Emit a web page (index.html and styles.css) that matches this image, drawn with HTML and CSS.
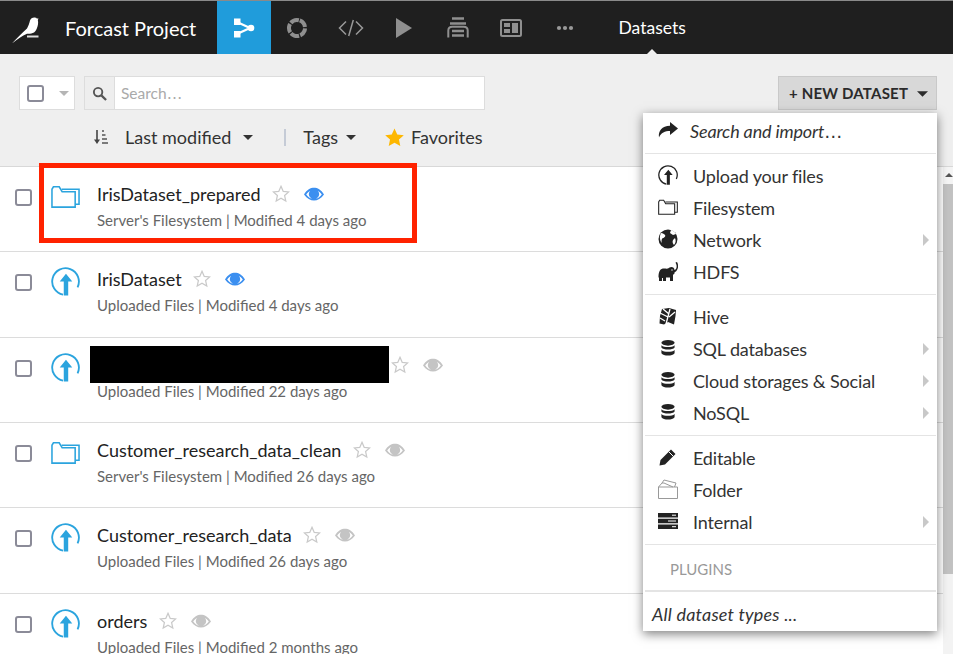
FILE: index.html
```html
<!DOCTYPE html>
<html lang="en">
<head>
  <meta charset="UTF-8" />
  <meta name="viewport" content="width=device-width, initial-scale=1.0"/>
  <title>Datasets - Forcast Project</title>
  <link rel="stylesheet" href="styles.css">
</head>
<body>
  <svg class="defs" width="0" height="0">
    <defs>
      <symbol id="ic-folder" viewBox="0 0 30 24">
        <path d="M1 23h24V7H11.500L8.500 2H2.500L1 4.500z" fill="none" stroke="currentColor" stroke-width="1.600"/>
        <path d="M11 4.500h18V20h-4" fill="none" stroke="currentColor" stroke-width="1.600"/>
      </symbol>
      <symbol id="ic-upload" viewBox="0 0 30 30">
        <path d="M12.500 28.600A13.800 13.800 0 1 1 27.500 21" fill="none" stroke="currentColor" stroke-width="1.900"/>
        <path d="M15.500 7l6.500 8h-4.200v14.500h-4.600V15H9z" fill="currentColor"/>
      </symbol>
      <symbol id="ic-star" viewBox="0 0 20 20">
        <path d="M10 1.500l2.500 5.600 6 .6-4.500 4 1.300 6L10 14.600 4.700 17.700l1.300-6-4.500-4 6-.6z" fill="none" stroke="currentColor" stroke-width="1.400"/>
      </symbol>
      <symbol id="ic-eye" viewBox="0 0 20 14">
        <path d="M0 7.500C3 2.500 6.500 .8 10 .8s7 1.700 10 6.700c-3 4.200-6.500 6-10 6s-7-1.800-10-6zM2.200 7.500c2.300 3 5 4.500 7.800 4.500s5.500-1.500 7.800-4.500C16.500 5.700 15 4.500 14 4a5 5 0 1 1-8 0c-1 .5-2.500 1.700-3.800 3.500z" fill="currentColor"/>
      </symbol>
      <symbol id="ic-db" viewBox="0 0 16 17">
        <ellipse cx="8" cy="3" rx="7" ry="3" fill="currentColor"/>
        <path d="M1 5.500C2.500 7 5 7.500 8 7.500s5.500-.5 7-2V8c-1 1.500-4 2.200-7 2.200S2 9.500 1 8zM1 10.500c1.500 1.500 4 2 7 2s5.500-.5 7-2V14c-1 1.700-4 2.500-7 2.500S2 15.700 1 14z" fill="currentColor"/>
      </symbol>
      <symbol id="ic-caret" viewBox="0 0 10 5">
        <path d="M0 0h10L5 5z" fill="currentColor"/>
      </symbol>
    </defs>
  </svg>

  <header class="topbar">
    <a class="brand">
      <svg class="bird" viewBox="0 0 30 30" width="30" height="30">
        <path d="M1 30.500C5 26 11 20 16 15.500c1.500-2.500 2.200-5 3-8 .8-2 2.500-3.300 5-3 1 .1 1.500.5 1.800 1H27.500L26.800 7c.5 2 .4 4-.3 6.500-.8 3-2 5-3.500 6-2 1.200-4.500 1.300-7 1.200C11 23 6 26.500 1 30.500z" fill="#fff"/>
        <path d="M16 22.500h11.500v2H16z" fill="#ddd"/>
      </svg>
      <span>Forcast Project</span>
    </a>
    <a class="nav-item active">
      <svg viewBox="0 0 22 22" width="22" height="22">
        <path d="M4 5l13 6L4 17" fill="none" stroke="#fff" stroke-width="2.200"/>
        <rect x="1" y="1.500" width="6.500" height="6.500" fill="#fff"/>
        <rect x="1" y="14" width="6.500" height="6.500" fill="#fff"/>
        <circle cx="18" cy="11" r="3.300" fill="#fff"/>
      </svg>
    </a>
    <a class="nav-item">
      <svg viewBox="0 0 22 22" width="22" height="22">
        <circle cx="11" cy="11" r="8" fill="none" stroke="#8f8f8f" stroke-width="4" stroke-dasharray="8.800 1.250" transform="rotate(-70 11 11)"/>
      </svg>
    </a>
    <a class="nav-item">
      <svg viewBox="0 0 26 18" width="26" height="18">
        <path d="M8 2.500L1.500 9 8 15.500M18 2.500L24.500 9 18 15.500M15.300 1l-4.600 16" fill="none" stroke="#999" stroke-width="1.500"/>
      </svg>
    </a>
    <a class="nav-item">
      <svg viewBox="0 0 16 20" width="16" height="20"><path d="M0 0l16 10L0 20z" fill="#8f8f8f"/></svg>
    </a>
    <a class="nav-item">
      <svg viewBox="0 0 22 21" width="22" height="21">
        <path d="M5 1.500h12M3 6.500h16" stroke="#8f8f8f" stroke-width="2.600" fill="none"/>
        <path d="M1.300 20.500v-7c0-3 2-3.700 4-3.700h11.400c2 0 4 .7 4 3.700v7" stroke="#8f8f8f" stroke-width="2" fill="none"/>
        <path d="M5 14h12M5 18.500h12" stroke="#8f8f8f" stroke-width="2.400" fill="none"/>
      </svg>
    </a>
    <a class="nav-item">
      <svg viewBox="0 0 22 18" width="22" height="18">
        <rect x="1" y="1" width="20" height="16" rx="1.500" fill="none" stroke="#8f8f8f" stroke-width="2"/>
        <path d="M4 4h6v4H4zM4 10h6v4H4zM12 4h6v10h-6z" fill="#8f8f8f"/>
      </svg>
    </a>
    <a class="nav-item">
      <svg viewBox="0 0 18 6" width="18" height="6">
        <circle cx="3" cy="3" r="2.100" fill="#999"/><circle cx="9" cy="3" r="2.100" fill="#999"/><circle cx="15" cy="3" r="2.100" fill="#999"/>
      </svg>
    </a>
    <a class="nav-title">Datasets</a>
  </header>

  <section class="toolbar">
    <div class="toolbar-main">
      <div class="select-all">
        <span class="check"></span>
        <svg class="caret-muted" width="10" height="5"><use href="#ic-caret"/></svg>
      </div>
      <div class="search">
        <span class="search-icon">
          <svg viewBox="0 0 16 16" width="15" height="15"><circle cx="6.500" cy="6.500" r="4.500" fill="none" stroke="#555" stroke-width="2"/><path d="M10 10l5 5" stroke="#555" stroke-width="2.400"/></svg>
        </span>
        <span class="search-input">Search<span class="ell">…</span></span>
      </div>
      <button class="new-btn">+ NEW DATASET <svg width="11" height="6"><use href="#ic-caret"/></svg></button>
    </div>
    <div class="toolbar-filters">
      <svg viewBox="0 0 14 16" width="14" height="16">
        <path d="M3 1v12" stroke="#444" stroke-width="1.600"/><path d="M0 10.500h6L3 15z" fill="#444"/>
        <path d="M8 2h2M8 6h3.500M8 10h5M8 14h6" stroke="#555" stroke-width="1.500"/>
      </svg>
      <span class="sort">Last modified</span>
      <svg width="10" height="5"><use href="#ic-caret"/></svg>
      <i class="sep"></i>
      <span>Tags</span>
      <svg width="10" height="5"><use href="#ic-caret"/></svg>
      <svg class="fav-star" viewBox="0 0 20 20" width="19" height="19"><path d="M10 .5l2.900 6.300 6.900.8-5.100 4.600 1.400 6.800-6.100-3.400-6.100 3.400 1.400-6.800L.2 7.600l6.900-.8z" fill="#fdb700"/></svg>
      <span>Favorites</span>
    </div>
  </section>

  <main class="list-wrap">
    <ul class="list">
      <li class="row">
        <span class="check"></span>
        <svg class="type-icon" width="29" height="29"><use href="#ic-folder"/></svg>
        <div class="info">
          <div class="name">IrisDataset_prepared <svg class="star" width="18" height="18"><use href="#ic-star"/></svg> <svg class="eye on" width="20" height="14"><use href="#ic-eye"/></svg></div>
          <div class="meta">Server's Filesystem | Modified 4 days ago</div>
        </div>
      </li>
      <li class="row">
        <span class="check"></span>
        <svg class="type-icon" width="29" height="29"><use href="#ic-upload"/></svg>
        <div class="info">
          <div class="name">IrisDataset <svg class="star" width="18" height="18"><use href="#ic-star"/></svg> <svg class="eye on" width="20" height="14"><use href="#ic-eye"/></svg></div>
          <div class="meta">Uploaded Files | Modified 4 days ago</div>
        </div>
      </li>
      <li class="row">
        <span class="check"></span>
        <svg class="type-icon" width="29" height="29"><use href="#ic-upload"/></svg>
        <div class="info">
          <div class="name"><span class="redacted"></span> <svg class="star" width="18" height="18"><use href="#ic-star"/></svg> <svg class="eye" width="20" height="14"><use href="#ic-eye"/></svg></div>
          <div class="meta">Uploaded Files | Modified 22 days ago</div>
        </div>
      </li>
      <li class="row">
        <span class="check"></span>
        <svg class="type-icon" width="29" height="29"><use href="#ic-folder"/></svg>
        <div class="info">
          <div class="name">Customer_research_data_clean <svg class="star" width="18" height="18"><use href="#ic-star"/></svg> <svg class="eye" width="20" height="14"><use href="#ic-eye"/></svg></div>
          <div class="meta">Server's Filesystem | Modified 26 days ago</div>
        </div>
      </li>
      <li class="row">
        <span class="check"></span>
        <svg class="type-icon" width="29" height="29"><use href="#ic-upload"/></svg>
        <div class="info">
          <div class="name">Customer_research_data <svg class="star" width="18" height="18"><use href="#ic-star"/></svg> <svg class="eye" width="20" height="14"><use href="#ic-eye"/></svg></div>
          <div class="meta">Uploaded Files | Modified 26 days ago</div>
        </div>
      </li>
      <li class="row">
        <span class="check"></span>
        <svg class="type-icon" width="29" height="29"><use href="#ic-upload"/></svg>
        <div class="info">
          <div class="name">orders <svg class="star" width="18" height="18"><use href="#ic-star"/></svg> <svg class="eye" width="20" height="14"><use href="#ic-eye"/></svg></div>
          <div class="meta">Uploaded Files | Modified 2 months ago</div>
        </div>
      </li>
    </ul>
    <div class="scrollbar">
      <span class="scroll-up"></span>
      <span class="scroll-thumb"></span>
    </div>
  </main>

  <div class="highlight"></div>

  <nav class="menu">
    <a class="menu-item em">
      <svg class="mi" viewBox="0 0 20 16" width="20" height="16"><path d="M12 0l8 6.500L12 13V9C7 9 3 10.500 1 15.500 0 9 4 3.800 12 3.800z" fill="#222"/></svg>
      <span>Search and import<span class="ell">…</span></span>
    </a>
    <hr>
    <a class="menu-item">
      <svg class="mi" width="20" height="20"><use href="#ic-upload"/></svg>
      <span>Upload your files</span>
    </a>
    <a class="menu-item">
      <svg class="mi" width="20" height="16"><use href="#ic-folder"/></svg>
      <span>Filesystem</span>
    </a>
    <a class="menu-item sub">
      <svg class="mi" viewBox="0 0 20 20" width="20" height="20"><circle cx="10" cy="10" r="9.500" fill="#222"/><path d="M3 4c2 0 3 1 4 2s-1 3-2 3-2 3-1 5c-2-2-3-6-1-10zM13 1c2 .5 4 2 5 4l-3 1-3-2zM17 9c1 2 1 5-1 7-1-1-2-3-1-5z" fill="#fff"/></svg>
      <span>Network</span>
    </a>
    <a class="menu-item">
      <svg class="mi" viewBox="0 0 20 21" width="20" height="21"><path d="M1 20v-3l-.5-1C.5 10 2.500 7.500 6 7.500c1.500 0 3 .3 4 0 1-.5 2-1.500 3.500-1.500 1.500 0 3 1 3 3v3c0 1-1 1.500-1.500 1.500V20h-3v-3.500H8V20H5v-3H4v3z" fill="#222"/><path d="M16 9c2 0 3-2 2.500-5L17.500 1.500l1.500-.5c1.500 2.500 1.500 6 0 8-.5 1-1.500 2-3 2.500z" fill="#222"/><circle cx="14" cy="9" r=".7" fill="#fff"/></svg>
      <span>HDFS</span>
    </a>
    <hr>
    <a class="menu-item">
      <svg class="mi" viewBox="0 0 18 17" width="20" height="17"><path d="M3 1l7-1 7 2-.5 6L15 16.500 9 14l-4 2.500-4.500-1L1 8z" fill="#222"/><path d="M1 5l8 4M1 10l5 3M4 1l6 5M11 1L7 16M16 4L10 9" stroke="#fff" stroke-width="1.300"/></svg>
      <span>Hive</span>
    </a>
    <a class="menu-item sub">
      <svg class="mi" width="20" height="16"><use href="#ic-db"/></svg>
      <span>SQL databases</span>
    </a>
    <a class="menu-item sub">
      <svg class="mi" width="20" height="16"><use href="#ic-db"/></svg>
      <span>Cloud storages &amp; Social</span>
    </a>
    <a class="menu-item sub">
      <svg class="mi" width="20" height="16"><use href="#ic-db"/></svg>
      <span>NoSQL</span>
    </a>
    <hr>
    <a class="menu-item">
      <svg class="mi" viewBox="0 0 18 18" width="20" height="18"><path d="M12 1.500l4.500 4.500L6 16.500l-5.500 1 1-5.500z" fill="#222"/><path d="M10 4l4.500 4.500" stroke="#fff" stroke-width="1"/></svg>
      <span>Editable</span>
    </a>
    <a class="menu-item">
      <svg class="mi" viewBox="0 0 20 20" width="20" height="20"><path d="M.5 19.500V8L4 4h2l9 4h4.500v11.500zM.5 8H15M4 4l2-3 12 3-1.500 4" fill="none" stroke="#999" stroke-width="1"/></svg>
      <span>Folder</span>
    </a>
    <a class="menu-item sub">
      <svg class="mi" viewBox="0 0 20 16" width="20" height="16"><path d="M0 0h20v4.500H0zM0 5.700h20v4.500H0zM0 11.400h20V16H0z" fill="#222"/><path d="M14 2.200h4M10 8h8M14 13.700h4" stroke="#fff" stroke-width="1"/></svg>
      <span>Internal</span>
    </a>
    <hr>
    <div class="menu-head">PLUGINS</div>
    <hr class="thick">
    <a class="menu-all">All dataset types ...</a>
  </nav>
</body>
</html>
```

FILE: styles.css
```css
* {
  box-sizing: border-box;
}
html, body {
  height: 100%;
}
body {
  margin: 0;
  overflow: hidden;
  background-color: #fff;
  color: #333;
  font-family: "Lato", "Open Sans", sans-serif;
  font-size: 18px;
  position: relative;
  display: flex;
  flex-direction: column;
}
.defs {
  position: absolute;
}
.ell {
  font-family: "DejaVu Sans", sans-serif;
  font-style: normal;
}

/* top bar */
.topbar {
  height: 54px;
  flex: none;
  display: flex;
  align-items: center;
  background-color: #1f1f1f;
  border-top: 1px solid #8a8a8a;
  color: #fff;
}
.brand {
  width: 217px;
  display: flex;
  align-items: center;
  font-size: 20px;
  padding-left: 11px;
}
.brand span {
  margin-left: 24px;
}
.nav-item {
  width: 53.500px;
  height: 100%;
  display: flex;
  align-items: center;
  justify-content: center;
}
.nav-item.active {
  background-color: #209cdb;
}
.nav-title {
  margin-left: 27px;
  font-size: 17.500px;
  position: relative;
  align-self: stretch;
  display: flex;
  align-items: center;
}
.nav-title::after {
  content: "";
  position: absolute;
  bottom: 0;
  left: 50%;
  margin-left: -5px;
  border: 5px solid transparent;
  border-top: 0;
  border-bottom-color: #efefef;
}

/* toolbar */
.toolbar {
  height: 113px;
  flex: none;
  background-color: #efefef;
  border-bottom: 1px solid #d8d8d8;
  padding: 22px 16px 0 19px;
}
.toolbar-main {
  display: flex;
  align-items: flex-start;
}
.select-all {
  width: 56px;
  height: 34px;
  background-color: #fff;
  border: 1px solid #ddd;
  display: flex;
  align-items: center;
  padding-left: 7px;
}
.caret-muted {
  margin-left: 15px;
  color: #b5b5b5;
}
.check {
  width: 17px;
  height: 17px;
  flex: none;
  display: block;
  background-color: #fff;
  border: 2px solid #8b8b98;
  border-radius: 3px;
}
.search {
  width: 401px;
  height: 34px;
  margin-left: 9px;
  display: flex;
  background-color: #fff;
  border: 1px solid #ddd;
}
.search-icon {
  width: 30px;
  background-color: #eee;
  border-right: 1px solid #ddd;
  display: flex;
  align-items: center;
  justify-content: center;
}
.search-input {
  padding-left: 6px;
  line-height: 32px;
  font-size: 15.500px;
  color: #aaa;
}
.new-btn {
  margin-left: auto;
  height: 34px;
  width: 159px;
  background-color: #d8d8d8;
  border: 1px solid #c9c9c9;
  color: #2b2b2b;
  font-family: inherit;
  font-size: 15px;
  font-weight: 700;
  letter-spacing: .2px;
  padding: 0 0 0 10px;
  text-align: left;
  white-space: nowrap;
}
.new-btn svg {
  margin-left: 6px;
  vertical-align: 2px;
}
.toolbar-filters {
  display: flex;
  align-items: center;
  height: 24px;
  margin-top: 15px;
  padding-left: 75px;
  color: #333;
}
.sort {
  margin-left: 17px;
  margin-right: 12px;
}
.sep {
  width: 2px;
  height: 17px;
  margin: 0 17px 0 31px;
  background-color: #c5cbd6;
}
.toolbar-filters span + svg {
  margin-top: 1px;
}
.toolbar-filters span:not(.sort) + svg {
  margin-left: 8px;
}
.fav-star {
  margin-left: 29px;
  margin-right: 7px;
}

/* dataset list */
.list-wrap {
  flex: 1;
  min-height: 0;
  display: flex;
  overflow: hidden;
}
.list {
  flex: 1;
  margin: 0;
  padding: 0;
  list-style: none;
}
.row {
  height: 85.330px;
  border-bottom: 1px solid #dcdcdc;
  display: flex;
  align-items: flex-start;
  padding: 15px 0 0 15px;
}
.row .check {
  margin-top: 7px;
}
.type-icon {
  margin-left: 19px;
  color: #2ba4de;
}
.info {
  margin-left: 17px;
  margin-top: -1px;
}
.name {
  height: 26px;
  display: flex;
  align-items: center;
  font-size: 18px;
  color: #222;
  white-space: pre;
}
.meta {
  margin-top: 4px;
  font-size: 15px;
  line-height: 18px;
  color: #666;
}
.star {
  margin-left: 7px;
  color: #c9c9c9;
}
.eye {
  margin-left: 14px;
  color: #c4c4c4;
}
.eye.on {
  color: #3b8ff0;
}
.redacted {
  display: block;
  width: 299px;
  height: 37px;
  margin: 0 -5px 0 -7px;
  background-color: #000;
}

/* scrollbar */
.scrollbar {
  width: 10px;
  flex: none;
  background-color: #f3f3f3;
  display: flex;
  flex-direction: column;
}
.scroll-up {
  height: 17px;
  background-color: #f5f5f5;
  position: relative;
}
.scroll-up::after {
  content: "";
  position: absolute;
  left: 2px;
  top: 6px;
  border: 4px solid transparent;
  border-top: 0;
  border-bottom-color: #555;
}
.scroll-thumb {
  height: 390px;
  background-color: #c2c2c2;
}

/* overlays */
.highlight {
  position: absolute;
  left: 39px;
  top: 163px;
  width: 378px;
  height: 80px;
  border: 5px solid #ff2200;
}
.menu {
  position: absolute;
  left: 643px;
  top: 113px;
  width: 294px;
  height: 518px;
  background-color: #fff;
  box-shadow: 0 3px 10px rgba(0, 0, 0, .5);
  padding: 2px 0 0;
  letter-spacing: -.15px;
}
.menu hr {
  margin: 6px 1px 6px 2px;
  border: 0;
  border-top: 1px solid #e4e4e4;
}
.menu hr.thick {
  border-top-width: 2px;
  margin-top: 12px;
  margin-bottom: 11px;
}
.menu-item {
  height: 32px;
  display: flex;
  align-items: center;
  position: relative;
  color: #333;
}
.menu-item .mi {
  flex: none;
  margin: -2px 15px 0 15px;
  color: #222;
}
.menu-item.em {
  font-style: italic;
}
.menu-item.em > span {
  margin-left: -3px;
}
.menu-item.sub::after {
  content: "";
  position: absolute;
  right: 8px;
  top: 10px;
  border: 6px solid transparent;
  border-right: 0;
  border-left-color: #c8c8c8;
}
.menu-head {
  margin-top: 15px;
  padding-left: 27px;
  font-size: 15px;
  line-height: 18px;
  letter-spacing: 0;
  color: #999;
}
.menu-all {
  display: block;
  padding-left: 9px;
  line-height: 22px;
  font-style: italic;
  letter-spacing: .2px;
  color: #333;
}
```
